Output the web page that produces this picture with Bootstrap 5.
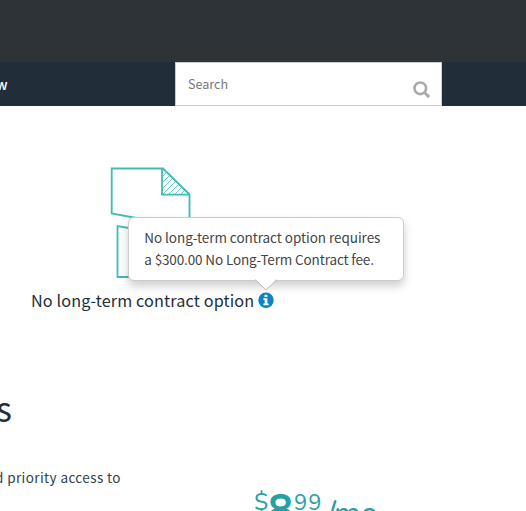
<!DOCTYPE html>
<html lang="en">
<head>
<meta charset="utf-8">
<meta name="viewport" content="width=device-width, initial-scale=1">
<title>Plans</title>
<link href="https://cdn.jsdelivr.net/npm/bootstrap@5.3.0/dist/css/bootstrap.min.css" rel="stylesheet">
<style>
body{font-family:"Noto Sans CJK SC","Noto Sans",sans-serif;color:#1f2e3a;height:511px;font-size:14px}
.topbar{height:62px;background:#2e3338}
.mainnav{height:44px;background:#212e39}
.nav-cut{width:179px;margin-left:-4px;font-size:14px;font-weight:500;line-height:44px}
.searchbox{width:267px;height:44px;border:1px solid #ccc;padding:0 10px 0 12px}
.searchbox input{font-size:12.6px;line-height:20px;width:200px;outline:0;color:#777;background:none}
.searchbox input::placeholder{color:#777;opacity:1}
.search-icon{margin-top:11px}
.feature{width:304px;padding-top:61px}
.feature-art{display:block;margin-left:109px}
.feature-label{font-size:16.2px;letter-spacing:.13px;line-height:24px;margin:9px 0 0 31px;white-space:nowrap}
.info{position:relative;width:16px;height:16px;margin-left:4px}
.tip{position:absolute;left:-130px;top:-75px;width:276px;height:64px;border:1px solid #ccc;border-radius:6px;box-shadow:0 5px 10px rgba(0,0,0,.2);font-size:13.5px;letter-spacing:-.05px;line-height:22px;color:#444;padding:8px 15px}
.tip-fee{letter-spacing:-.13px}
.tip-arrow{position:absolute;left:126px;top:61px}
.section-title{font-size:34px;line-height:44px;margin:74px 0 0 -4px;font-weight:400}
.perk{font-size:13.5px;letter-spacing:.4px;line-height:22px;color:#333f4a;margin:12px 0 0 -5px;white-space:nowrap;width:259px}
.price{margin-top:33px}
</style>
<script src="https://cdn.jsdelivr.net/npm/bootstrap@5.3.0/dist/js/bootstrap.bundle.min.js"></script>
</head>
<body class="bg-white overflow-hidden">
<header>
  <div class="topbar"></div>
  <nav class="mainnav d-flex">
    <div class="nav-cut text-white">w</div>
    <div class="searchbox bg-white d-flex align-items-center justify-content-between">
      <input class="border-0 p-0" type="text" placeholder="Search" aria-label="Search">
      <svg class="search-icon" width="18" height="18" viewBox="0 0 18 18" fill="none" stroke="#aaa"><circle cx="7.3" cy="7.3" r="5.8" stroke-width="2.6"/><path d="M11.8 11.8l4.3 4.3" stroke-width="3"/></svg>
    </div>
  </nav>
</header>
<main>
  <section class="feature">
    <svg class="feature-art" width="84" height="112" viewBox="109 167 84 112" fill="none" stroke="#3dbdb5" stroke-width="1.8">
      <defs><clipPath id="fold"><path d="M162 168.500V195H190z"/></clipPath></defs>
      <path d="M189.500 223V194.500L163 168.500H111.700V213.500L150 220.500"/>
      <path d="M162 168.500V194.700H190"/>
      <path clip-path="url(#fold)" stroke-width=".8" d="M160 179l12-12M160 185l16-16M160 191l20-20M160 197l24-24M166 197l20-20M172 197l20-20M178 197l16-16M184 197l10-10"/>
      <path d="M150 231.500L117.500 226V277H184V237"/>
    </svg>
    <div class="feature-label d-flex align-items-center">
      <span>No long-term contract option</span>
      <span class="info">
        <svg class="d-block" width="16" height="16" viewBox="0 0 16 16"><circle cx="8" cy="8.300" r="7.700" fill="#0a84c6"/><path fill="#fff" d="M6.500 2.800h2.900v2.200H6.500zM5.400 6.300h4v5.200h1.300v1.800H5.400v-1.800h1.300V8H5.400z"/></svg>
        <span class="tip bg-white text-nowrap" role="tooltip">No long-term contract option requires<br><span class="tip-fee">a $300.00 No Long-Term Contract fee.</span>
          <svg class="tip-arrow" width="22" height="12" viewBox="0 0 22 12"><path d="M0 0L11 11L22 0z" fill="#fff"/><path d="M0 .5L11 11L22 .5" fill="none" stroke="#bbb"/></svg>
        </span>
      </span>
    </div>
  </section>
  <h2 class="section-title">s</h2>
  <div class="d-flex mt-4">
    <div class="perk">d priority access to</div>
    <svg class="price" width="140" height="24" viewBox="254 487 140 24" fill="#26a1a1" font-family="Nunito, Lato, sans-serif">
      <text x="254" y="510" font-size="24">$</text>
      <text x="268" y="524.500" font-size="44.500" font-weight="700" textLength="25" lengthAdjust="spacingAndGlyphs">8</text>
      <text x="294" y="510" font-size="22" letter-spacing="1">99</text>
      <text x="327" y="524" font-size="31" font-weight="500" textLength="51" lengthAdjust="spacingAndGlyphs">/mo</text>
    </svg>
  </div>
</main>
</body>
</html>
